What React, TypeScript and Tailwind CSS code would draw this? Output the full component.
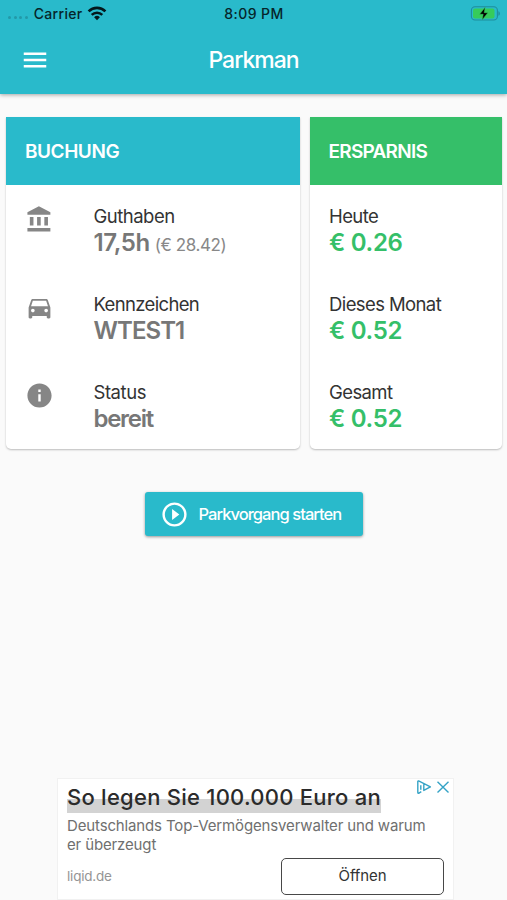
import type { ReactNode } from 'react'
import type { IconType } from 'react-icons'
import { MdDirectionsCar, MdInfo, MdMenu, MdPlayCircleOutline } from 'react-icons/md'

interface BookingEntry {
  icon: IconType
  label: string
  labelClass: string
  value: string
  valueClass: string
  note?: string
}

function BankIcon({ className }: { className?: string }) {
  return (
    <svg viewBox="0 0 24 24" className={className} fill="currentColor">
      <path d="M4 10v7h3v-7H4zm6 0v7h3v-7h-3zM2 22h19v-3H2v3zm14-12v7h3v-7h-3zm-4.5-9L2 6v2h19V6l-9.5-5z" />
    </svg>
  )
}

const bookingEntries: BookingEntry[] = [
  {
    icon: BankIcon as IconType,
    label: 'Guthaben',
    labelClass: 'tracking-[-0.5px]',
    value: '17,5h',
    valueClass: 'tracking-[-0.4px]',
    note: '(€ 28.42)',
  },
  {
    icon: MdDirectionsCar,
    label: 'Kennzeichen',
    labelClass: 'tracking-[-0.65px]',
    value: 'WTEST1',
    valueClass: 'tracking-[-0.95px]',
  },
  {
    icon: MdInfo,
    label: 'Status',
    labelClass: 'tracking-[-0.45px]',
    value: 'bereit',
    valueClass: 'tracking-[-1.3px]',
  },
]

const savings = [
  { label: 'Heute', value: '€ 0.26' },
  { label: 'Dieses Monat', value: '€ 0.52' },
  { label: 'Gesamt', value: '€ 0.52' },
]

function StatusBar() {
  return (
    <div className="grid h-[26px] grid-cols-3 items-center pl-2 pr-[7px] text-[14px] font-medium text-[#06252a]">
      <div className="flex items-center">
        <div className="flex gap-[2.6px] pt-2">
          {[0, 1, 2, 3].map((dot) => (
            <span key={dot} className="size-[3px] rounded-full bg-[#2399a8]" />
          ))}
        </div>
        <span className="ml-[6px] tracking-[0.3px]">Carrier</span>
        <svg viewBox="0 0 20 15" className="ml-[5px] h-[15px] w-5" fill="none" stroke="#04181c">
          <path d="M1.6 5.4a12 12 0 0 1 16.8 0" strokeWidth="2.7" />
          <path d="M4.7 8.8a7.6 7.6 0 0 1 10.6 0" strokeWidth="2.5" />
          <path d="M10 14.2l-2.9-3a4.1 4.1 0 0 1 5.8 0z" fill="#04181c" stroke="none" />
        </svg>
      </div>
      <span className="text-center tracking-[0.45px]">8:09 PM</span>
      <svg viewBox="0 0 30 15" className="h-[15px] w-[30px] justify-self-end">
        <rect x="1.4" y="0.8" width="26" height="13.2" rx="3.6" fill="none" stroke="#1f8d9c" strokeWidth="1.1" />
        <rect x="3" y="2.4" width="21.5" height="10" rx="2" fill="#36cb5b" />
        <path d="M28.5 5.2c1.6.6 1.6 4 0 4.6z" fill="#1b8391" />
        <path d="M15.2 1.2 9.6 8.3h3.6l-1.1 5.6 5.8-7.2h-3.7z" fill="#000" stroke="#36cb5b" strokeWidth="0.5" />
      </svg>
    </div>
  )
}

function Card({ title, color, children }: { title: string; color: string; children: ReactNode }) {
  return (
    <section className="flex h-[332px] flex-col rounded-b-[5px] bg-white shadow-[0_1px_2px_rgba(0,0,0,0.25)]">
      <h2
        className={`flex h-[68px] shrink-0 items-center pl-[19px] pt-[2px] text-[19px] font-semibold text-white ${color}`}
      >
        {title}
      </h2>
      {children}
    </section>
  )
}

function AdBanner() {
  return (
    <aside className="relative ml-[57px] h-[122px] w-[397px] border border-[#f1f1f1] bg-white px-[9px] pt-[5px] text-[#6f6f6f]">
      <h3 className="w-fit bg-linear-to-b from-transparent from-52% to-[#d3d3d3] to-52% pb-[2px] text-[22px] font-medium leading-[27px] tracking-[0.25px] text-[#2b2b2b]">
        So legen Sie 100.000 Euro an
      </h3>
      <p className="mt-[3px] whitespace-nowrap text-[15px] leading-[19px] tracking-[-0.14px]">
        Deutschlands Top-Vermögensverwalter und warum
        <br />
        er überzeugt
      </p>
      <div className="mt-[4px] flex items-center justify-between">
        <span className="text-[13.5px] tracking-[-0.2px] text-[#959595]">liqid.de</span>
        <button
          type="button"
          className="h-[37px] w-[163px] rounded-[5px] border-[1.5px] border-[#484848] text-[15px] tracking-[-0.1px] text-[#333]"
        >
          Öffnen
        </button>
      </div>
      <svg
        viewBox="0 0 34 16"
        className="absolute right-[3px] top-0 h-4 w-[34px]"
        fill="none"
        stroke="#35a3c6"
        strokeWidth="1.4"
        strokeLinejoin="round"
      >
        <path d="M5.3 12.6 2.6 14.3Q1.8 14.3 1.8 13.5V2.5Q1.8 1.7 2.6 1.9L14.4 7.9 7.8 11.4V5.2" />
        <path d="M4.8 6.2v4.6" />
        <path d="M21.5 2.7l11 10.8M32.5 2.7l-11 10.8" />
      </svg>
    </aside>
  )
}

export default function App() {
  return (
    <div className="flex h-[900px] w-[507px] flex-col overflow-hidden bg-[#fafafa] font-['Inter',sans-serif]">
      <header className="h-[94px] shrink-0 bg-[#29bacb] shadow-[0_1px_4px_rgba(0,0,0,0.35)]">
        <StatusBar />
        <div className="grid h-[68px] grid-cols-[1fr_auto_1fr] items-center pl-[20px] pr-[20px] text-white">
          <MdMenu className="size-[30px]" />
          <h1 className="text-[23px] font-medium tracking-[-1px]">Parkman</h1>
        </div>
      </header>

      <main className="flex flex-1 flex-col">
        <div className="mt-[23px] grid grid-cols-[294px_192.5px] gap-[9.5px] pl-[6px]">
          <Card title="BUCHUNG" color="bg-[#29bacb] tracking-[-0.45px]">
            <ul className="pt-[20px]">
              {bookingEntries.map(({ icon: Icon, label, labelClass, value, valueClass, note }) => (
                <li key={label} className="flex h-[88px] pl-[19px]">
                  <Icon className="size-[29px] shrink-0 text-[#868686]" />
                  <div className="ml-[39.5px]">
                    <div className={`text-[18.5px] leading-[23px] text-[#333] ${labelClass}`}>{label}</div>
                    <div className="flex items-baseline leading-[29px] text-[#777]">
                      <span className={`text-[24px] font-semibold ${valueClass}`}>{value}</span>
                      {note && <span className="ml-[5px] text-[17px] tracking-[-0.4px] text-[#888]">{note}</span>}
                    </div>
                  </div>
                </li>
              ))}
            </ul>
          </Card>
          <Card title="ERSPARNIS" color="bg-[#35bf69] tracking-[-0.75px]">
            <ul className="pt-[20px]">
              {savings.map(({ label, value }) => (
                <li key={label} className="h-[88px] pl-[19.5px]">
                  <div className="text-[18.5px] leading-[23px] tracking-[-0.6px] text-[#333]">{label}</div>
                  <div className="text-[24px] font-semibold leading-[29px] tracking-[-0.3px] text-[#35bf69]">
                    {value}
                  </div>
                </li>
              ))}
            </ul>
          </Card>
        </div>

        <button
          type="button"
          className="mx-auto mt-[43px] flex h-[44px] w-[218px] items-center rounded-[3px] bg-[#29bacb] pl-[15px] text-white shadow-[0_1px_3px_rgba(0,0,0,0.4)]"
        >
          <MdPlayCircleOutline className="size-[29px]" />
          <span className="ml-[10px] whitespace-nowrap text-[16.5px] font-medium tracking-[-0.95px]">
            Parkvorgang starten
          </span>
        </button>

        <div className="mt-auto">
          <AdBanner />
        </div>
      </main>
    </div>
  )
}
